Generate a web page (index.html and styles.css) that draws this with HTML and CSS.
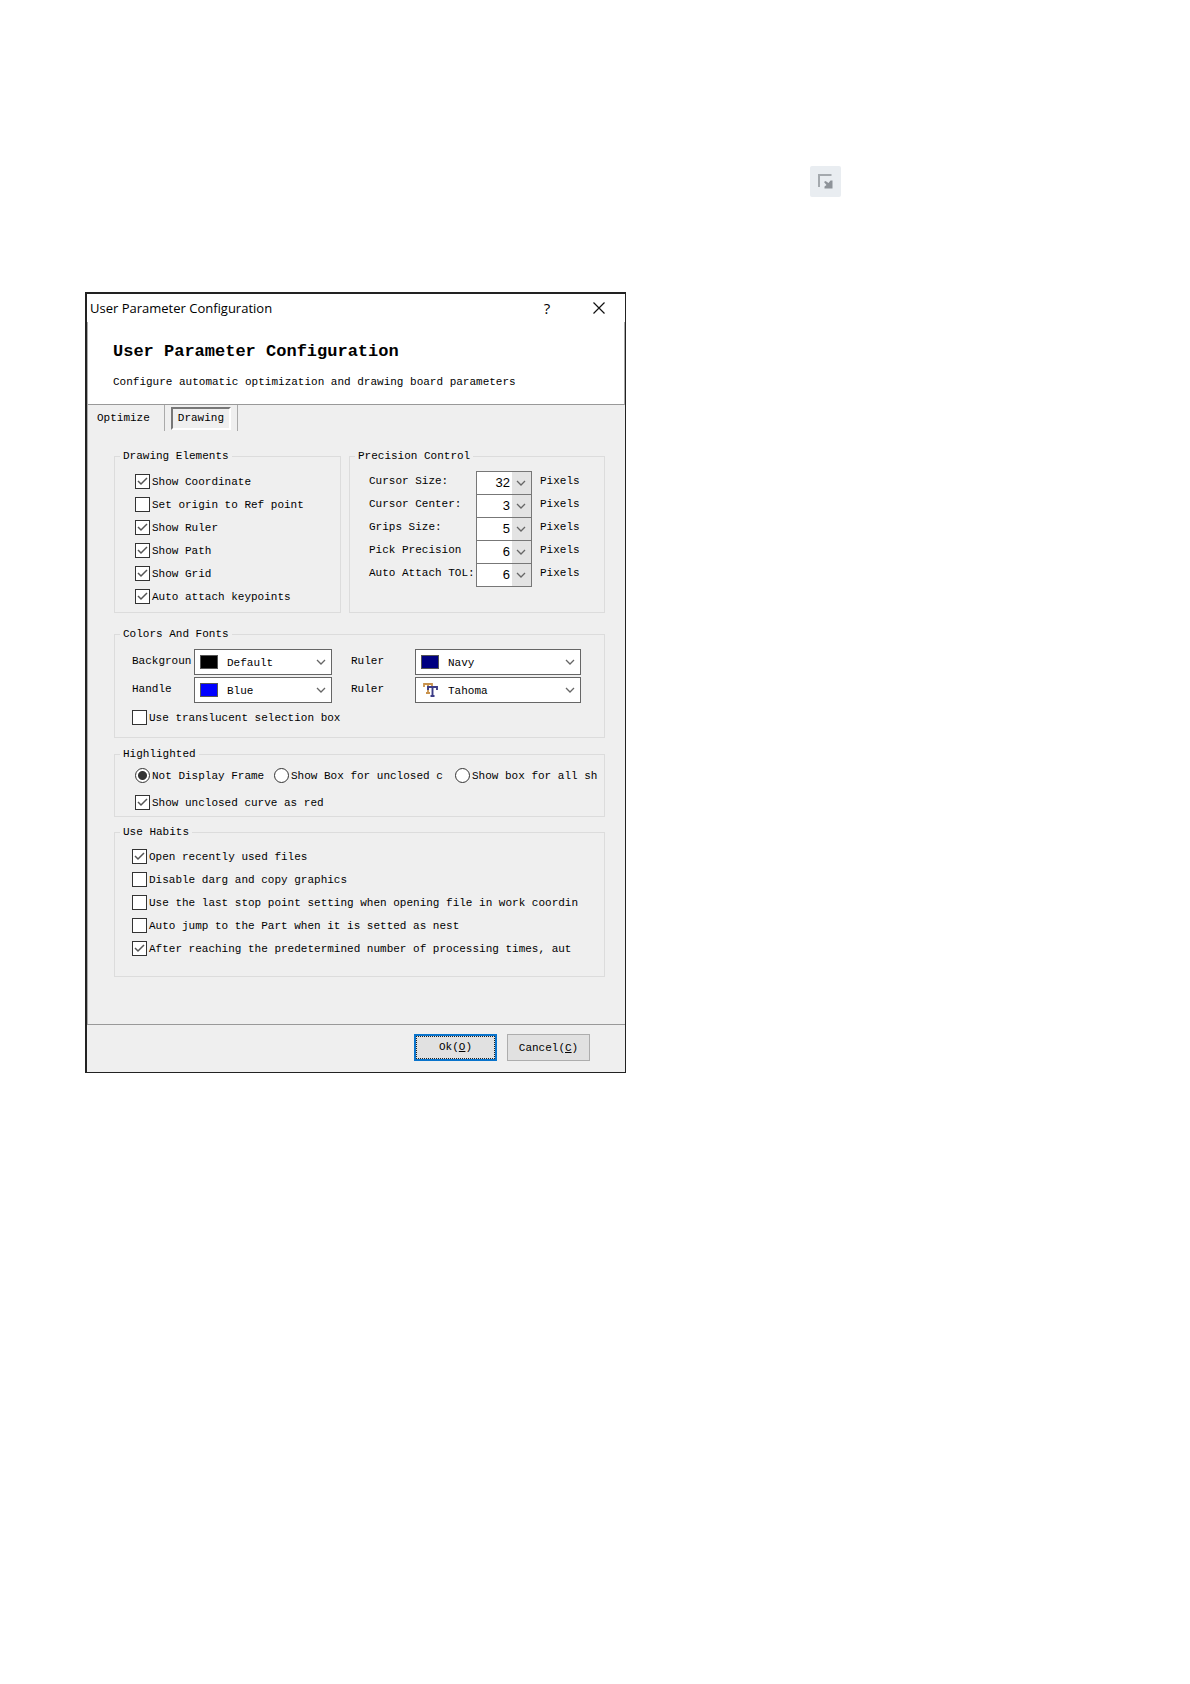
FILE: index.html
```html
<!DOCTYPE html>
<html lang="en">
<head>
<meta charset="utf-8">
<title>User Parameter Configuration</title>
<link rel="stylesheet" href="styles.css">
</head>
<body>
<svg class="defs" aria-hidden="true">
  <symbol id="chevron" viewBox="0 0 10 6"><path d="M1 1l4 4 4-4" fill="none" stroke="#666" stroke-width="1.3"/></symbol>
</svg>
<main class="page">
  <div class="toolbar">
    <button class="tool" type="button" aria-label="Parameters">
      <svg width="15" height="15" viewBox="0 0 15 15"><path d="M1 13V1h12.500" fill="none" stroke="#a4a9ae" stroke-width="2"/><path d="M14.500 6.500v8H6.500v-2l2-1.500-2.500-3 1.500-1 3 2 2-2.500z" fill="#8e9399"/></svg>
    </button>
  </div>
  <form class="dialog">
    <div class="titlebar">
      <span class="caption">User Parameter Configuration</span>
      <button class="winbtn help" type="button">?</button>
      <button class="winbtn" type="button" aria-label="Close"><svg width="12" height="12" viewBox="0 0 12 12"><path d="M.5.5l11 11M11.500.5l-11 11" stroke="#111" stroke-width="1.200"/></svg></button>
    </div>
    <div class="inner">
      <header class="header">
        <h1>User Parameter Configuration</h1>
        <p>Configure automatic optimization and drawing board parameters</p>
      </header>
      <nav class="tabs">
        <div class="tabcell"><button class="tab" type="button">Optimize</button></div>
        <div class="tabcell"><button class="tab active" type="button">Drawing</button></div>
      </nav>
      <div class="content">
        <div class="columns">
          <fieldset class="elements">
            <legend>Drawing Elements</legend>
            <label class="check"><input type="checkbox" checked><span>Show Coordinate</span></label>
            <label class="check"><input type="checkbox"><span>Set origin to Ref point</span></label>
            <label class="check"><input type="checkbox" checked><span>Show Ruler</span></label>
            <label class="check"><input type="checkbox" checked><span>Show Path</span></label>
            <label class="check"><input type="checkbox" checked><span>Show Grid</span></label>
            <label class="check"><input type="checkbox" checked><span>Auto attach keypoints</span></label>
          </fieldset>
          <fieldset class="precision">
            <legend>Precision Control</legend>
            <div class="prow"><label for="p1">Cursor Size:</label><div class="spin"><select id="p1"><option>32</option></select><svg><use href="#chevron"/></svg></div><span>Pixels</span></div>
            <div class="prow"><label for="p2">Cursor Center:</label><div class="spin"><select id="p2"><option>3</option></select><svg><use href="#chevron"/></svg></div><span>Pixels</span></div>
            <div class="prow"><label for="p3">Grips Size:</label><div class="spin"><select id="p3"><option>5</option></select><svg><use href="#chevron"/></svg></div><span>Pixels</span></div>
            <div class="prow"><label for="p4">Pick Precision</label><div class="spin"><select id="p4"><option>6</option></select><svg><use href="#chevron"/></svg></div><span>Pixels</span></div>
            <div class="prow"><label for="p5">Auto Attach TOL:</label><div class="spin"><select id="p5"><option>6</option></select><svg><use href="#chevron"/></svg></div><span>Pixels</span></div>
          </fieldset>
        </div>
        <fieldset class="colors">
          <legend>Colors And Fonts</legend>
          <div class="crow">
            <label for="c1">Backgroun</label>
            <div class="combo"><i class="swatch black"></i><select id="c1"><option>Default</option></select><svg><use href="#chevron"/></svg></div>
            <label for="c2" class="second">Ruler</label>
            <div class="combo"><i class="swatch navy"></i><select id="c2"><option>Navy</option></select><svg><use href="#chevron"/></svg></div>
          </div>
          <div class="crow">
            <label for="c3">Handle</label>
            <div class="combo"><i class="swatch blue"></i><select id="c3"><option>Blue</option></select><svg><use href="#chevron"/></svg></div>
            <label for="c4" class="second">Ruler</label>
            <div class="combo"><svg class="fonticon" viewBox="0 0 18 14"><path d="M3 4V1h8v3M7 1v9M5 10h4" fill="none" stroke="#c8924c" stroke-width="1.800"/><path d="M7 7V4h9v3M11.500 4v9M9.500 13h4" fill="none" stroke="#3c3c86" stroke-width="1.900"/></svg><select id="c4"><option>Tahoma</option></select><svg><use href="#chevron"/></svg></div>
          </div>
          <label class="check"><input type="checkbox"><span>Use translucent selection box</span></label>
        </fieldset>
        <fieldset class="highlighted">
          <legend>Highlighted</legend>
          <div class="radios">
            <label class="check"><input type="radio" name="frame" checked><span>Not Display Frame</span></label>
            <label class="check"><input type="radio" name="frame"><span>Show Box for unclosed c</span></label>
            <label class="check"><input type="radio" name="frame"><span>Show box for all sh</span></label>
          </div>
          <label class="check"><input type="checkbox" checked><span>Show unclosed curve as red</span></label>
        </fieldset>
        <fieldset class="habits">
          <legend>Use Habits</legend>
          <label class="check"><input type="checkbox" checked><span>Open recently used files</span></label>
          <label class="check"><input type="checkbox"><span>Disable darg and copy graphics</span></label>
          <label class="check"><input type="checkbox"><span>Use the last stop point setting when opening file in work coordin</span></label>
          <label class="check"><input type="checkbox"><span>Auto jump to the Part when it is setted as nest</span></label>
          <label class="check"><input type="checkbox" checked><span>After reaching the predetermined number of processing times, aut</span></label>
        </fieldset>
      </div>
    </div>
    <footer class="footer">
      <button class="btn primary" type="button"><span>Ok(<u>O</u>)</span></button>
      <button class="btn" type="button"><span>Cancel(<u>C</u>)</span></button>
    </footer>
  </form>
</main>
</body>
</html>
```
FILE: styles.css
```css
* { box-sizing: border-box; }
body { margin: 0; background: #fff; color: #000; font: 11px/14px "Liberation Mono", monospace; }
button, select, input { font: inherit; color: inherit; margin: 0; }
.defs { position: absolute; width: 0; height: 0; }
.page { padding: 166px 85px 80px; }
.toolbar { display: flex; justify-content: flex-end; padding-right: 264px; margin-bottom: 95px; }
.tool { display: flex; align-items: center; justify-content: center; width: 31px; height: 31px; padding: 0; border: 0; border-radius: 2px; background: #e9edf1; }

.dialog { max-width: 541px; border: 1px solid #222; border-left: 2px solid #222; border-top-width: 2px; background: #efefef; }
.titlebar { display: flex; align-items: center; height: 28px; padding-left: 3px; background: #fff; font: 13px/18px "Open Sans", sans-serif; }
.caption { flex: 1; }
.winbtn { display: flex; align-items: center; justify-content: center; width: 52px; height: 28px; padding: 0; border: 0; background: none; }
.help { font-size: 15px; }
.inner { border-left: 1px solid #aaa; }
.header { padding: 20px 25px 15px; border-bottom: 1px solid #999; border-right: 1px solid #aaa; background: #fff; }
h1 { margin: 0 0 13px; font-size: 17px; line-height: 20px; }
p { margin: 0; }

.tabs { display: flex; height: 26px; padding-left: 1px; }
.tabcell { display: flex; align-items: center; padding: 0 6px; border-right: 1px solid #aaa; }
.tab { height: 23px; padding: 0 4px; border: 0; background: none; }
.tabcell:first-child { padding: 0 10px 0 4px; }
.active { padding: 0 5px; border: 2px solid; border-color: #777 #fff #fff #777; }

.content { padding: 18px 20px 47px 26px; }
fieldset { min-width: 0; margin: 0; padding: 0 0 0 5px; border: 1px solid #dcdcdc; overflow: hidden; }
legend { padding: 0 3px; line-height: 14px; }
.columns { display: grid; grid-template-columns: 227fr 256fr; gap: 8px; }
.elements { padding: 7px 0 4px 20px; }
.elements legend { margin-left: -15px; }
.check { display: flex; align-items: center; height: 23px; white-space: nowrap; overflow: hidden; }
.check input { appearance: none; flex: none; width: 15px; height: 15px; margin-right: 2px; border: 1px solid #333; background: #fff; }
.check input[type="checkbox"]:checked { background: #fff url("data:image/svg+xml,%3Csvg xmlns='http://www.w3.org/2000/svg' viewBox='0 0 13 13'%3E%3Cpath d='M2 6l3 3 6-6' fill='none' stroke='%23555' stroke-width='1.500'/%3E%3C/svg%3E"); }
.check input[type="radio"] { border-radius: 50%; }
.check input[type="radio"]:checked { background: radial-gradient(circle, #333 4px, #fff 5px); }

.precision { padding: 8px 17px 0; }
.precision legend { margin-left: -12px; }
.prow { display: grid; grid-template-columns: 109px 56px 1fr; height: 23px; line-height: 21px; white-space: nowrap; }
.prow label { padding-left: 2px; overflow: hidden; }
.prow > span { padding-left: 8px; }
.spin { display: flex; align-items: center; height: 24px; border: 1px solid #777; background: #e3e3e3; }
.spin select { width: 35px; height: 22px; padding: 0 2px 0 0; border: 0; border-radius: 0; appearance: none; background: #fff; text-align: right; text-align-last: right; font: 13px/20px "Liberation Sans", sans-serif; }
.spin svg { width: 10px; height: 6px; margin-left: 4px; }

.colors { margin-top: 14px; padding: 8px 23px 8px 17px; }
.colors legend, .habits legend { margin-left: -12px; }
.crow { display: grid; grid-template-columns: 62px 138fr 83px 166fr; height: 26px; margin-bottom: 2px; line-height: 24px; }
.crow:nth-of-type(2) { margin-bottom: 3px; }
.crow label { overflow: hidden; }
.crow .second { padding-left: 19px; }
.combo { display: flex; align-items: center; min-width: 0; padding: 0 5px; border: 1px solid #666; background: #fff; }
.combo select { flex: 1; min-width: 0; height: 22px; padding: 0; border: 0; appearance: none; background: none; }
.combo svg { width: 10px; height: 6px; }
.combo .fonticon { width: 18px; height: 14px; margin-right: 9px; }
.swatch { width: 18px; height: 14px; margin-right: 9px; border: 1px solid #555; }
.black { background: #000; }
.blue { background: #00f; }
.navy { background: #000080; }

.highlighted { margin-top: 9px; padding: 3px 2px 2px 20px; }
.highlighted legend { margin-left: -15px; }
.radios { display: grid; grid-template-columns: 139px 181px 1fr; margin-bottom: 4px; }
.radios .check { padding-right: 6px; }
.radios .check:last-child { padding-right: 0; }
.habits { margin-top: 8px; padding: 6px 4px 16px 17px; }

.footer { display: flex; justify-content: flex-end; gap: 10px; padding: 9px 35px 11px; border-top: 1px solid #999; }
.btn { width: 83px; height: 27px; padding: 0; border: 1px solid #adadad; background: #e1e1e1; }
.primary { border: 2px solid #0a74cc; }
.primary span { display: block; height: 23px; border: 1px dotted #222; line-height: 21px; }
```
